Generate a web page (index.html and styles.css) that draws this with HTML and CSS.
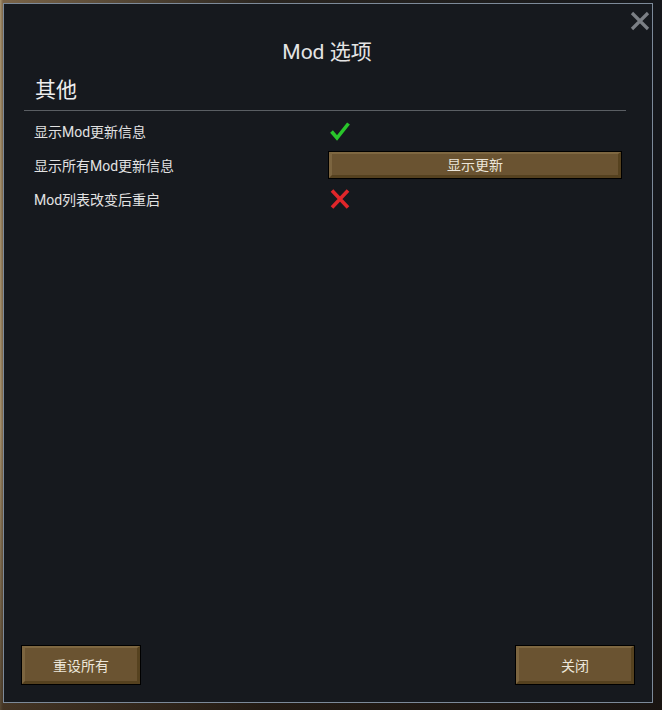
FILE: index.html
```html
<!DOCTYPE html>
<html lang="zh-CN">
<head>
<meta charset="utf-8">
<title>Mod 选项</title>
<link rel="stylesheet" href="styles.css">
</head>
<body>
<div class="panel">
  <button class="close" aria-label="关闭">
    <svg width="22" height="22" viewBox="0 0 22 22"><path d="M3 3 L19 19 M19 3 L3 19" stroke="#7b7f85" stroke-width="3.2" fill="none"/></svg>
  </button>
  <div class="title">Mod 选项</div>
  <div class="section">其他</div>
  <div class="divider"></div>
  <div class="row">
    <div class="label">显示Mod更新信息</div>
    <div class="control">
      <svg class="icon" width="22" height="22" viewBox="0 0 22 22"><path d="M2.5 11.5 L8 18 L19.5 3.5" stroke="#29c52b" stroke-width="3.6" fill="none" stroke-linejoin="miter"/></svg>
    </div>
  </div>
  <div class="row">
    <div class="label">显示所有Mod更新信息</div>
    <div class="control">
      <button class="btn wide">显示更新</button>
    </div>
  </div>
  <div class="row">
    <div class="label">Mod列表改变后重启</div>
    <div class="control">
      <svg class="icon" width="22" height="22" viewBox="0 0 22 22"><path d="M3 2.5 L19 19.5 M19 2.5 L3 19.5" stroke="#e0262a" stroke-width="3.6" fill="none"/></svg>
    </div>
  </div>
  <div class="footer">
    <button class="btn big">重设所有</button>
    <button class="btn big">关闭</button>
  </div>
</div>
</body>
</html>
```
FILE: styles.css
```css
html, body {
  margin: 0;
  padding: 0;
}
body {
  width: 662px;
  height: 710px;
  overflow: hidden;
  background:
    linear-gradient(to bottom, rgba(0,0,0,0) 0%, rgba(0,0,0,0) 60%, rgba(30,20,12,0.6) 100%),
    linear-gradient(to right, #a99571 0px, #7a6448 3px, #2a2520 40%, #15171b 100%);
  font-family: Roboto, "Noto Sans CJK SC", "Noto Sans", sans-serif;
  color: #e6e6e6;
}
.panel {
  position: relative;
  box-sizing: border-box;
  margin: 3px;
  width: 650px;
  height: 700px;
  border: 1px solid #7d8a99;
  background: #16191e;
  display: flex;
  flex-direction: column;
  padding: 0 26px 17px 20px;
}
.close {
  position: absolute;
  top: 4px;
  right: -1px;
  width: 26px;
  height: 26px;
  padding: 0;
  border: 0;
  background: transparent;
  display: flex;
  align-items: center;
  justify-content: center;
}
.title {
  margin-top: 36px;
  font-size: 21px;
  line-height: 24px;
  text-align: center;
  color: #e4e4e4;
  padding-left: 4px;
}
.section {
  margin-top: 14px;
  padding-left: 11px;
  font-size: 21px;
  line-height: 24px;
  color: #eeeeee;
}
.divider {
  margin-top: 8px;
  height: 1px;
  background: #5a5e63;
}
.row {
  margin-top: 0;
  height: 34px;
  display: flex;
  align-items: center;
}
.divider + .row {
  margin-top: 3px;
}
.label {
  width: 304px;
  padding-left: 10px;
  box-sizing: border-box;
  font-size: 14px;
  color: #e2e2e2;
}
.control {
  width: 294px;
  display: flex;
  align-items: center;
}
.icon {
  margin-left: 1px;
}
.btn {
  box-sizing: border-box;
  font-family: Roboto, "Noto Sans CJK SC", sans-serif;
  color: #ece6da;
  background: #6a5331;
  border-style: solid;
  border-width: 2px 3px 3px 3px;
  border-color: #7e6741 #56421f #55411f #7c6540;
  box-shadow: 0 0 0 1px #000;
  padding: 0;
  cursor: pointer;
}
.wide {
  width: 292px;
  height: 26px;
  margin-left: 1px;
  font-size: 14px;
  line-height: 20px;
}
.footer {
  margin-top: auto;
  margin-left: -3px;
  margin-right: -9px;
  display: flex;
  justify-content: space-between;
}
.big {
  width: 118px;
  height: 38px;
  margin: 1px;
  font-size: 14px;
}
```
